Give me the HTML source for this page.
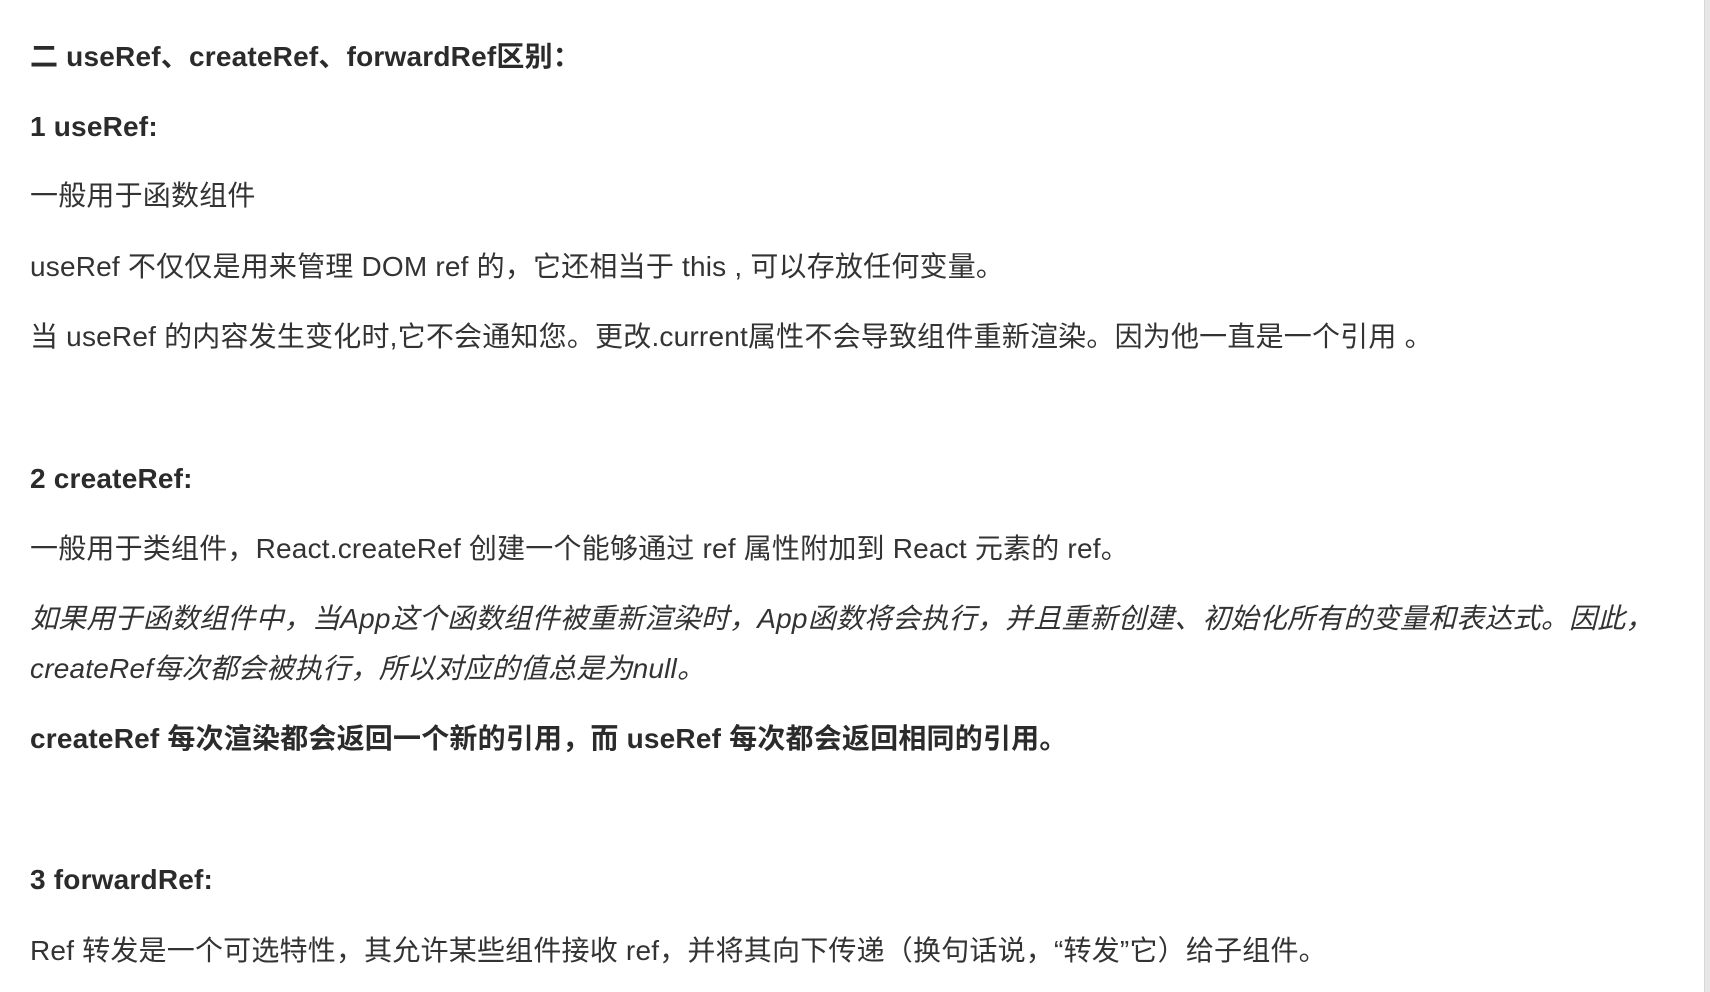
<!DOCTYPE html>
<html><head><meta charset="utf-8"><style>
html,body{margin:0;padding:0;background:#fff;width:1710px;height:992px;overflow:hidden}
body{font-family:"Liberation Sans","Noto Sans CJK SC",sans-serif;color:#333;font-size:28px;letter-spacing:0.2px;position:relative}
.l{position:absolute;left:30px;height:40px;line-height:40px;white-space:nowrap}
b{font-weight:bold;color:#2b2b2b}
i{font-style:italic}
.bar{position:absolute;left:1704px;top:0;width:6px;height:992px;background:#e6e6e6;border-left:1px solid #d8d8d8}
</style></head><body>
<div class="l" style="top:37px"><b>二 useRef、createRef、forwardRef区别：</b></div>
<div class="l" style="top:107px"><b>1 useRef:</b></div>
<div class="l" style="top:176px">一般用于函数组件</div>
<div class="l" style="top:247px">useRef 不仅仅是用来管理 DOM ref 的，它还相当于 this , 可以存放任何变量。</div>
<div class="l" style="top:317px">当 useRef 的内容发生变化时,它不会通知您。更改.current属性不会导致组件重新渲染。因为他一直是一个引用 。</div>
<div class="l" style="top:459px"><b>2 createRef:</b></div>
<div class="l" style="top:529px">一般用于类组件，React.createRef 创建一个能够通过 ref 属性附加到 React 元素的 ref。</div>
<div class="l" style="top:599px"><i>如果用于函数组件中，当App这个函数组件被重新渲染时，App函数将会执行，并且重新创建、初始化所有的变量和表达式。因此，</i></div>
<div class="l" style="top:649px"><i>createRef每次都会被执行，所以对应的值总是为null。</i></div>
<div class="l" style="top:719px"><b>createRef 每次渲染都会返回一个新的引用，而 useRef 每次都会返回相同的引用。</b></div>
<div class="l" style="top:860px"><b>3 forwardRef:</b></div>
<div class="l" style="top:931px">Ref 转发是一个可选特性，其允许某些组件接收 ref，并将其向下传递（换句话说，“转发”它）给子组件。</div>
<div class="bar"></div>
</body></html>
